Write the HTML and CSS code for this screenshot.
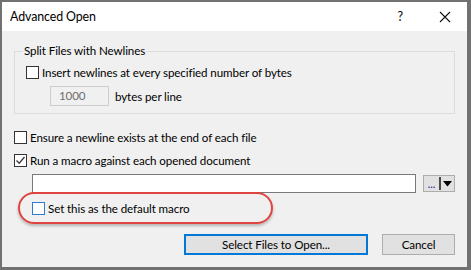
FILE: index.html
```html
<!DOCTYPE html>
<html lang="en">
<head>
  <meta charset="UTF-8" />
  <title>Advanced Open</title>
  <link rel="stylesheet" href="styles.css">
</head>
<body>

  <div class="dialog">

    <!-- Title bar -->
    <div class="titlebar">
      <span class="title">Advanced Open</span>
      <span class="help">?</span>
      <svg class="close" width="12" height="12" viewBox="0 0 12 12">
        <path d="M1 1 L11 11 M11 1 L1 11" stroke="#111" stroke-width="1.1" fill="none"/>
      </svg>
    </div>

    <div class="content">

      <!-- Split files group -->
      <fieldset class="group">
        <legend>Split Files with Newlines</legend>
        <label class="row">
          <span class="box"></span>
          <span>Insert newlines at every specified number of bytes</span>
        </label>
        <div class="bytes-row">
          <span class="num-input">1000</span>
          <span>bytes per line</span>
        </div>
      </fieldset>

      <label class="row row-ensure">
        <span class="box"></span>
        <span>Ensure a newline exists at the end of each file</span>
      </label>

      <label class="row row-macro">
        <span class="box checked">
          <svg width="11" height="11" viewBox="0 0 11 11">
            <path d="M1.5 5.5 L4.2 8.2 L9.5 2" stroke="#3a3a3a" stroke-width="1.3" fill="none"/>
          </svg>
        </span>
        <span>Run a macro against each opened document</span>
      </label>

      <div class="macro-row">
        <span class="macro-input"></span>
        <span class="browse">
          <span class="dots">...</span>
          <span class="sep"></span>
          <svg width="9" height="6" viewBox="0 0 9 6"><path d="M0 0 H9 L4.5 5.5 Z" fill="#000"/></svg>
        </span>
      </div>

      <label class="row row-default">
        <span class="box hover"></span>
        <span>Set this as the default macro</span>
      </label>

      <div class="buttons">
        <button class="btn primary">Select Files to Open...</button>
        <button class="btn">Cancel</button>
      </div>

      <!-- red annotation ring -->
      <div class="highlight"></div>
    </div>
  </div>

</body>
</html>
```

FILE: styles.css
```css
body {
  margin: 0;
  width: 471px;
  height: 270px;
  background: #717171;
  font-family: 'Lato', 'Segoe UI', sans-serif;
  font-size: 11.6px;
  letter-spacing: -0.1px;
  color: #000;
  overflow: hidden;
}

.dialog {
  margin: 2px 4px 0 2px;
  width: 465px;
  height: 265px;
  background: #f0f0f0;
  display: flex;
  flex-direction: column;
}

.titlebar {
  height: 29px;
  background: #fff;
  display: flex;
  align-items: center;
  padding-left: 8px;
  flex-shrink: 0;
}

.title {
  font-size: 12.4px;
  flex: 1;
}

.help {
  font-size: 12.4px;
  margin-right: 36px;
}

.close {
  margin-right: 16px;
}

.content {
  position: relative;
  flex: 1;
  padding: 12px 12px 0 12px;
}

.group {
  margin: 0;
  padding: 0 0 7px 11px;
  border: 1px solid #dcdcdc;
  min-width: 0;
}

.group legend {
  padding: 0 1px;
  margin-left: -3px;
  line-height: 16px;
}

.row {
  display: flex;
  align-items: center;
  height: 16px;
  gap: 3px;
  white-space: nowrap;
}

.group .row {
  margin-top: 5px;
}

.box {
  width: 11px;
  height: 11px;
  border: 1px solid #333;
  background: #fff;
  display: flex;
  align-items: center;
  justify-content: center;
  flex-shrink: 0;
}

.box.hover {
  border-color: #2f7bd4;
}

.bytes-row {
  display: flex;
  align-items: center;
  margin: 6px 0 0 24px;
  gap: 6px;
}

.num-input {
  width: 49px;
  height: 18px;
  line-height: 18px;
  padding-left: 8px;
  border: 1px solid #cccccc;
  background: #f0f0f0;
  color: #6d6d6d;
}

.row-ensure {
  margin-top: 15px;
}

.row-macro {
  margin-top: 7px;
}

.macro-row {
  display: flex;
  align-items: center;
  margin: 6px 0 0 18px;
  gap: 7px;
}

.macro-input {
  width: 382px;
  height: 17px;
  border: 1px solid #7a7a7a;
  background: #fff;
}

.browse {
  width: 29px;
  height: 15px;
  border: 1px solid #adadad;
  background: #e1e1e1;
  display: flex;
  align-items: center;
  padding-left: 1px;
}

.dots {
  color: #1a1aa0;
  font-size: 11px;
  line-height: 10px;
  width: 13px;
  text-align: center;
}

.sep {
  width: 2px;
  height: 13px;
  background: #4a4a4a;
  margin: 0 2px 0 1px;
}

.row-default {
  margin: 7px 0 0 18px;
}

.buttons {
  display: flex;
  justify-content: flex-end;
  gap: 14px;
  margin-top: 18px;
}

.btn {
  font-family: inherit;
  font-size: 11.6px;
  letter-spacing: -0.1px;
  height: 21px;
  padding: 0;
  background: #e1e1e1;
  border: 1px solid #adadad;
  color: #000;
}

.btn.primary {
  width: 184px;
  border: 2px solid #0078d7;
}

.btn:last-child {
  width: 73px;
}

.highlight {
  position: absolute;
  left: 16px;
  top: 161px;
  width: 251px;
  height: 28px;
  border: 2px solid #e0443f;
  border-radius: 16px;
  box-shadow: 0 2px 3px rgba(0, 0, 0, 0.25);
}
```
